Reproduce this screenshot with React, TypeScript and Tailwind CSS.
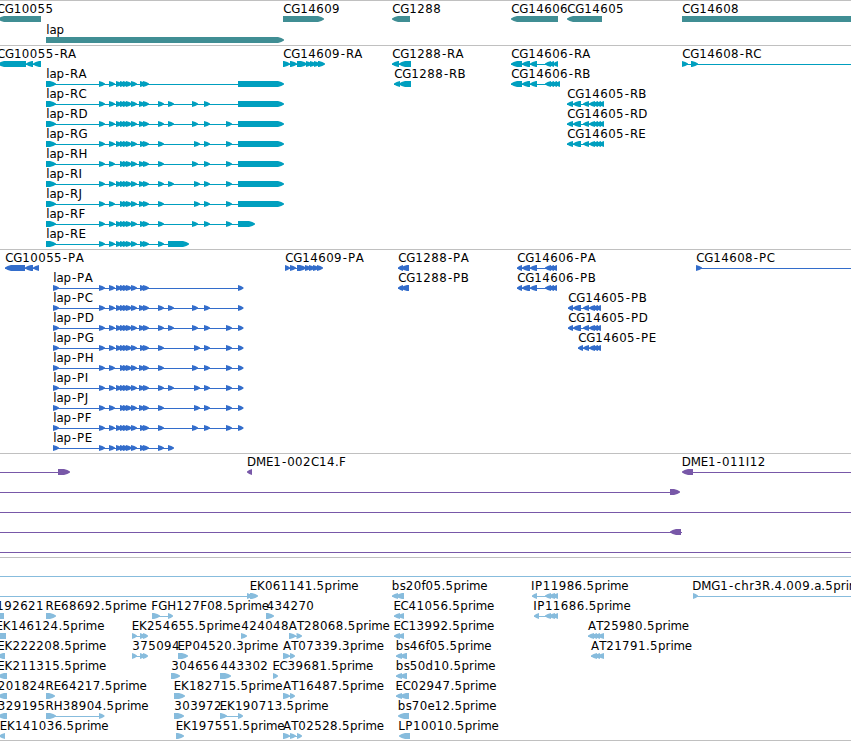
import React from "react";

type Exon = [number, number];
interface Feature {
  row: number;
  dir?: "l" | "r";
  exons?: Exon[];
  line?: Exon;
  label?: string;
  at?: number;
}
interface TrackProps {
  name: string;
  height: number;
  pitch: number;
  color: string;
  features: Feature[];
}

// Advance of each character in a label, in pixels.
const ADVANCE: Record<string, number> = {
  A: 8.3, B: 8, C: 8, D: 9, E: 7.2, F: 7, G: 9, H: 9, I: 4, J: 4, K: 8, L: 7, M: 10, P: 7.7, R: 8.3, T: 7,
  a: 7, b: 8, c: 7, d: 8, e: 7, f: 4, h: 8, i: 3, l: 3.2, m: 11.3, p: 7.6, r: 4.9, s: 6, "-": 6, ".": 4,
};

function glyphXs(label: string, start: number) {
  let pen = start + 0.3;
  return [...label]
    .map((c) => {
      const x = c === "-" ? pen + 0.8 : pen;
      pen += ADVANCE[c] ?? 7.95;
      return x.toFixed(2);
    })
    .join(" ");
}

function exonPath([a, b]: Exon, y: number, dir: "l" | "r") {
  const tip = Math.min(6, b - a);
  const [base, point, s] = dir === "r" ? [a, b, 1] : [b, a, -1];
  const shoulder = point - s * tip;
  const mid = point - s * tip * 0.45;
  return `M${base} ${y}H${shoulder}L${mid} ${y + 1.1}L${point} ${y + 2.5}V${y + 3.5}L${mid} ${y + 4.9}L${shoulder} ${y + 6}H${base}Z`;
}

function Track({ name, height, pitch, color, features }: TrackProps) {
  return (
    <section aria-label={name} className="w-full shrink-0 overflow-hidden border-t border-[#c0c0c0]">
      <svg width="851" height={height - 1} viewBox={`0 1 851 ${height - 1}`} className={`block ${color}`}>
        {features.map((f, i) => {
          const y = 16 + f.row * pitch;
          const ex = f.exons ?? [];
          const span: Exon | undefined = f.line ?? (ex.length > 1 ? [ex[0][0], ex[ex.length - 1][1] - 3] : undefined);
          return (
            <g key={i} fill="currentColor">
              {span && <rect x={span[0]} y={y + 3} width={span[1] - span[0]} height="1" />}
              {ex.map((e, k) => (
                <path key={k} d={exonPath(e, y, f.dir ?? "r")} />
              ))}
              {f.label && (
                <text
                  x={glyphXs(f.label, f.at ?? ex[0][0])}
                  y={y - 3}
                  className="fill-black font-['DejaVu_Sans',sans-serif] text-[11.8px]"
                >
                  {f.label}
                </text>
              )}
            </g>
          );
        })}
      </svg>
    </section>
  );
}

const small = (xs: number[]): Exon[] => xs.map((x) => [x, x + 6]);

const genes: Feature[] = [
  { row: 0, dir: "l", exons: [[-2, 41]], label: "CG10055", at: -3.6 },
  { row: 1, exons: [[46, 284]], label: "lap" },
  { row: 0, exons: [[283, 324]], label: "CG14609" },
  { row: 0, dir: "l", exons: [[392, 410]], label: "CG1288" },
  { row: 0, dir: "l", exons: [[511, 558]], label: "CG14606" },
  { row: 0, dir: "l", exons: [[567, 602]], label: "CG14605" },
  { row: 0, exons: [[682, 870]], label: "CG14608" },
];

const HEAD = [99, 109, 116, 120, 123, 126, 131];
const HEAD_SHORT = [99, 109, 120, 123, 126, 131];
const isoforms: [string, number[]][] = [
  ["A", [...HEAD, 140, 143]],
  ["C", [...HEAD, 139, 143, 158, 168, 192, 204]],
  ["D", [...HEAD, 139, 143, 158, 168, 192, 204, 226]],
  ["G", [...HEAD, 140, 143, 158, 194, 204, 226]],
  ["H", [...HEAD_SHORT, 139, 143, 158, 192, 204, 226]],
  ["I", [...HEAD, 139, 143, 158, 168, 194, 204, 226]],
  ["J", [...HEAD_SHORT, 139, 143, 158, 194, 204, 226]],
  ["F", [...HEAD, 140, 143, 158, 192, 204, 226]],
  ["E", [...HEAD, 140, 143, 158]],
];
const lastExon: Record<string, Exon> = { F: [238, 255], E: [168, 189] };

const rb14605: Exon[] = [[567, 573], [573, 581], [583, 589], [589, 595], [593, 598], [596, 601], [599, 604]];
const pb14605: Exon[] = [[568, 573], [573, 581], [583, 589], [589, 595], [593, 598], [596, 601]];

const transcripts: Feature[] = [
  { row: 0, dir: "l", exons: [[-2, 26], [26, 33], [33, 41]], label: "CG10055-RA", at: -3.4 },
  ...isoforms.map(([id, xs], i): Feature => ({
    row: i + 1,
    exons: [[46, 56], ...small(xs), lastExon[id] ?? [238, 284]],
    label: `lap-R${id}`,
  })),
  { row: 0, exons: [[283, 290], [290, 297], [297, 307], [306, 312], [310, 316], [314, 320], [318, 325]], label: "CG14609-RA" },
  { row: 0, dir: "l", exons: [[392, 399], [399, 411]], label: "CG1288-RA" },
  { row: 1, dir: "l", exons: [[394, 400], [399, 411]], label: "CG1288-RB" },
  { row: 0, dir: "l", exons: [[511, 522], [522, 530], [530, 537], [545, 551], [549, 554], [553, 558]], label: "CG14606-RA" },
  { row: 1, dir: "l", exons: [[511, 522], [522, 530], [530, 537], [545, 551], [549, 554], [552, 557], [555, 560]], label: "CG14606-RB" },
  { row: 2, dir: "l", exons: rb14605, label: "CG14605-RB" },
  { row: 3, dir: "l", exons: rb14605, label: "CG14605-RD" },
  { row: 4, dir: "l", exons: rb14605, label: "CG14605-RE" },
  { row: 0, exons: [[682, 688], [691, 698]], line: [682, 851], label: "CG14608-RC" },
];

const pa14606: Exon[] = [[517, 522], [522, 530], [530, 537], [545, 551], [549, 554], [552, 557]];

const proteins: Feature[] = [
  { row: 0, dir: "l", exons: [[5, 25], [25, 33], [33, 39]], label: "CG10055-PA" },
  ...isoforms.map(([id, xs], i): Feature => ({
    row: i + 1,
    exons: [[53, 59], ...small(xs), id === "E" ? [168, 174] : [238, 243.5]],
    label: `lap-P${id}`,
  })),
  { row: 0, exons: [[285, 290], [290, 296], [297, 306], [305, 311], [309, 315], [313, 319], [317, 323]], label: "CG14609-PA" },
  { row: 0, dir: "l", exons: [[398, 403], [401, 409]], label: "CG1288-PA" },
  { row: 1, dir: "l", exons: [[398, 403], [401, 409]], label: "CG1288-PB" },
  { row: 0, dir: "l", exons: pa14606, label: "CG14606-PA" },
  { row: 1, dir: "l", exons: pa14606, label: "CG14606-PB" },
  { row: 2, dir: "l", exons: pb14605, label: "CG14605-PB" },
  { row: 3, dir: "l", exons: pb14605, label: "CG14605-PD" },
  { row: 4, dir: "l", exons: [[578, 583], [583, 589], [589, 595], [593, 598], [596, 601]], label: "CG14605-PE" },
  { row: 0, exons: [[696, 702]], line: [696, 851], label: "CG14608-PC" },
];

const clones: Feature[] = [
  { row: 0, exons: [[58, 70]], line: [0, 60] },
  { row: 0, dir: "l", exons: [[247, 252]], label: "DME1-002C14.F", at: 246.7 },
  { row: 0, dir: "l", exons: [[682, 693]], line: [690, 851], label: "DME1-011I12", at: 681.5 },
  { row: 1, exons: [[670, 680]], line: [0, 672] },
  { row: 2, line: [0, 851] },
  { row: 3, dir: "l", exons: [[670, 681]], line: [0, 682] },
  { row: 4, line: [0, 851] },
];

const ests: Feature[] = [
  { row: 0, line: [0, 851] },
  { row: 1, exons: [[247, 252], [250, 258]], line: [0, 250], label: "EK061141.5prime", at: 249.4 },
  { row: 1, dir: "l", exons: [[392, 398], [396, 404]], label: "bs20f05.5prime", at: 391.4 },
  { row: 1, dir: "l", exons: [[532, 537], [545, 551], [549, 555], [553, 558]], label: "IP11986.5prime", at: 530.8 },
  { row: 1, exons: [[693, 698]], line: [693, 851], label: "DMG1-chr3R.4.009.a.5prime", at: 692 },
  { row: 2, dir: "l", exons: [[-6, 4]], label: "192621", at: -4 },
  { row: 2, exons: [[46, 56]], label: "RE68692.5prime", at: 45.2 },
  { row: 2, exons: [[152, 160], [168, 173]], label: "FGH127F08.5prime", at: 151 },
  { row: 2, exons: [[266, 274]], label: "434270", at: 266.3 },
  { row: 2, dir: "l", exons: [[394, 400], [398, 404]], label: "EC41056.5prime", at: 393.1 },
  { row: 2, dir: "l", exons: [[534, 539], [545, 551], [549, 555], [553, 558]], label: "IP11686.5prime", at: 532.9 },
  { row: 3, dir: "l", exons: [[-6, 6]], label: "EK146124.5prime", at: -4.8 },
  { row: 3, exons: [[132, 137], [140, 145], [143, 148]], label: "EK254655.5prime", at: 131.4 },
  { row: 3, exons: [[241, 247]], label: "424048" },
  { row: 3, exons: [[289, 296], [296.5, 302]], label: "AT28068.5prime", at: 288.4 },
  { row: 3, dir: "l", exons: [[394, 400], [398, 404]], label: "EC13992.5prime", at: 393.1 },
  { row: 3, dir: "l", exons: [[588, 594], [592, 597], [595, 600], [598, 604]], label: "AT25980.5prime", at: 587.6 },
  { row: 4, dir: "l", exons: [[-3, 5]], label: "EK222208.5prime", at: -3 },
  { row: 4, exons: [[132, 137], [140, 145], [143, 148]], label: "375094" },
  { row: 4, exons: [[178, 188]], label: "EP04520.3prime", at: 177.2 },
  { row: 4, exons: [[283, 290], [290, 295]], label: "AT07339.3prime", at: 282.7 },
  { row: 4, dir: "l", exons: [[396, 402], [400, 407]], label: "bs46f05.5prime", at: 395.4 },
  { row: 4, dir: "l", exons: [[591, 597], [595, 600], [598, 604]], label: "AT21791.5prime", at: 590.6 },
  { row: 5, dir: "l", exons: [[-2, 7]], label: "EK211315.5prime", at: -3 },
  { row: 5, exons: [[171, 180]], label: "304656" },
  { row: 5, exons: [[220, 231]], label: "443302", at: 220.3 },
  { row: 5, exons: [[273, 278]], label: "EC39681.5prime", at: 272.1 },
  { row: 5, dir: "l", exons: [[396, 402], [400, 407]], label: "bs50d10.5prime", at: 395.4 },
  { row: 6, dir: "l", exons: [[-2, 7]], label: "201824", at: -2.5 },
  { row: 6, exons: [[46, 55]], label: "RE64217.5prime", at: 45.2 },
  { row: 6, exons: [[174, 185]], label: "EK182715.5prime", at: 173.4 },
  { row: 6, exons: [[283, 290], [290, 295]], label: "AT16487.5prime", at: 282.7 },
  { row: 6, dir: "l", exons: [[396, 402], [400, 409]], label: "EC02947.5prime", at: 395.2 },
  { row: 7, dir: "l", exons: [[-2, 7]], label: "329195", at: -2.5 },
  { row: 7, exons: [[46, 56], [99, 104.5]], label: "RH38904.5prime", at: 45.2 },
  { row: 7, exons: [[174, 184]], label: "303972" },
  { row: 7, exons: [[220, 227], [238, 243]], label: "EK190713.5prime", at: 219.4 },
  { row: 7, dir: "l", exons: [[398, 409]], label: "bs70e12.5prime", at: 397.4 },
  { row: 8, dir: "l", exons: [[-1, 5]], label: "EK141036.5prime", at: -0.6 },
  { row: 8, exons: [[176, 184]], label: "EK197551.5prime", at: 175.4 },
  { row: 8, exons: [[283, 290], [290, 296], [297, 302]], label: "AT02528.5prime", at: 282.7 },
  { row: 8, dir: "l", exons: [[399, 410]], label: "LP10010.5prime", at: 398 },
];

export default function App() {
  return (
    <main className="flex h-[741px] w-[851px] flex-col overflow-hidden border-b border-[#c0c0c0] bg-white">
      <Track name="Genes" height={45} pitch={21} color="text-[#408e94]" features={genes} />
      <Track name="Transcripts" height={204} pitch={20} color="text-[#009fbf]" features={transcripts} />
      <Track name="Proteins" height={204} pitch={20} color="text-[#336dcb]" features={proteins} />
      <Track name="Clones" height={104} pitch={20} color="text-[#7858a8]" features={clones} />
      <Track name="ESTs" height={183} pitch={20} color="text-[#87bcdd]" features={ests} />
    </main>
  );
}
